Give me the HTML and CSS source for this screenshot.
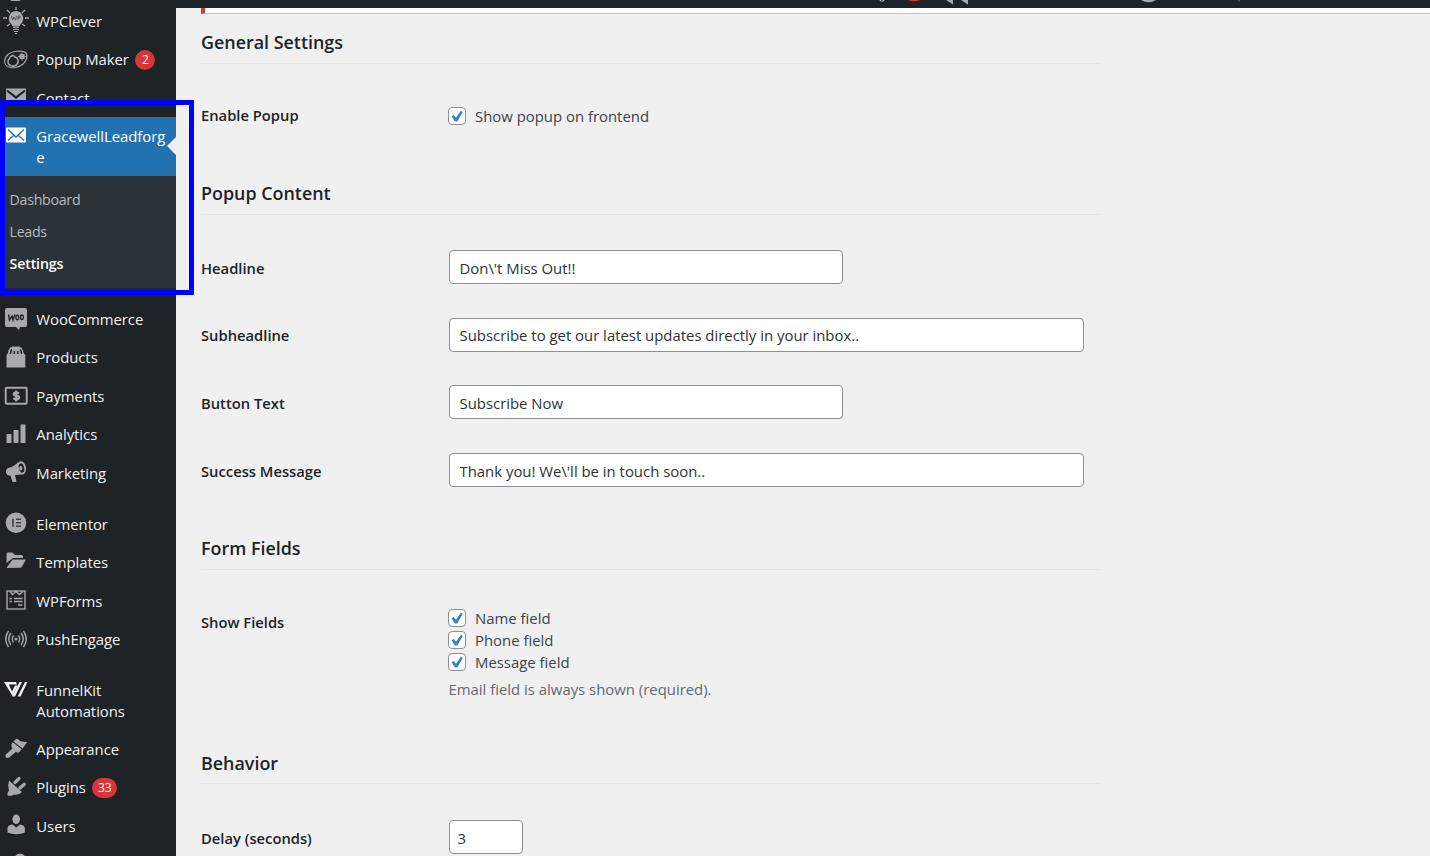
FILE: index.html
```html
<!DOCTYPE html>
<html lang="en">
<head>
    <meta charset="UTF-8">
    <meta name="viewport" content="width=device-width, initial-scale=1.0">
    <title>Popup Settings</title>
    <link rel="stylesheet" href="styles.css">
</head>
<body>
    <svg width="0" height="0" class="defs">
        <symbol id="tick" viewBox="0 0 18 18"><path d="M3.500 9.300 5.900 7.900 8 10.800 12.900 3.800 14.800 4.900 9.200 14.400 7 14.400Z" fill="#3582c4"/></symbol>
    </svg>

    <div class="topbar">
        <svg width="1430" height="8" viewBox="0 0 1430 8">
            <path d="M10 0h11q-2 1.500-5.500 1.500T10 0z" fill="#a7aaad"/>
            <path d="M880 0v.5q2 1.500 4 0V0" fill="none" stroke="#c3c4c7"/>
            <path d="M908 0h12q-6 2.500-12 0z" fill="#d63638"/>
            <path d="M946 0h7v4.500zM961 0h7v4.500z" fill="#a7aaad"/>
            <path d="M1141 0h15q-7.500 4.500-15 0z" fill="#a7aaad"/>
            <path d="M1238 0h2v1.500h-2z" fill="#50575e"/>
        </svg>
    </div>

    <div class="layout">
        <ul class="menu">
            <li class="item">
                <svg class="icon big" viewBox="0 0 26 28"><g fill="none" stroke="#a7aaad" stroke-width="1.300"><path d="M13 0v3M4 3l3 3M22 3l-3 3M0 11h4M22 11h4M4 19l3-2M22 19l-3-2"/></g><path d="M13 4a7.500 7.500 0 0 0-4.800 13L10 19.500h6l1.800-2.500A7.500 7.500 0 0 0 13 4z" fill="#a7aaad"/><path d="M8.500 9l1 4 1.500-3 1.500 3 1-4M15 13V9h2v2h-2" fill="none" stroke="#50575e"/><path d="M10 20.500h6M10 22.500h6M11 24.500h4M12 26.500h2" stroke="#a7aaad" stroke-width="1.200"/></svg>
                <span class="name">WPClever</span>
            </li>
            <li class="item">
                <svg class="icon big" viewBox="0 0 26 28" fill="none" stroke="#a7aaad"><path d="M5 8.500C9 5 19 4 22.500 6.500c3 3 1 9-3 12-4 3-10 4-14 2.500C0 18.500 1 12 5 8.500z" stroke-width="1.100"/><path d="M7.500 19.500c-3-1-3.500-5-1-7 .5-3 4-4 5.500-1.500 3 .5 4 4 2.500 6.500-1.500 2.500-4.500 3-7 2z" stroke-width="1.500"/><circle cx="19" cy="10.500" r="2" stroke-width="1.500"/><path d="M19 6.500v8M15 10.500h8M16.500 8l5 5M21.500 8l-5 5" stroke-width=".9"/></svg>
                <span class="name">Popup Maker</span><span class="badge">2</span>
            </li>
            <li class="item">
                <svg class="icon" viewBox="0 0 22 22"><path d="M1 2.500h20v15H1z" fill="#a7aaad"/><path d="M2 4.500l9 7 9-7" fill="none" stroke="#1d2327" stroke-width="2.200"/></svg>
                <span class="name">Contact</span>
            </li>
            <li class="item current">
                <svg class="icon" viewBox="0 0 22 22"><path d="M2 2.500h18q1 0 1 1v13q0 1-1 1H2q-1 0-1-1v-13q0-1 1-1z" fill="#fff"/><path d="M3 4.500l8 7.500 8-7.500M3 15.500l5.500-5M19 15.500l-5.500-5" fill="none" stroke="#2271b1" stroke-width="1.300"/></svg>
                <span class="name">GracewellLeadforg<br>e</span>
            </li>
            <li>
                <ul class="submenu">
                    <li>Dashboard</li>
                    <li>Leads</li>
                    <li class="active">Settings</li>
                </ul>
            </li>
            <li class="item">
                <svg class="icon" viewBox="0 0 22 22"><path d="M2 0h18q2 0 2 2v15q0 2-2 2h-5l-1 3-3-3H2q-2 0-2-2V2Q0 0 2 0z" fill="#a7aaad"/><path d="M3.500 6.500l1 5.500L7 8l1 4 2-5.500" fill="none" stroke="#1d2327" stroke-width="1.400"/><ellipse cx="12.300" cy="9.500" rx="1.400" ry="2.300" fill="none" stroke="#1d2327" stroke-width="1.300"/><ellipse cx="16.900" cy="9.300" rx="1.400" ry="2.300" fill="none" stroke="#1d2327" stroke-width="1.300"/></svg>
                <span class="name">WooCommerce</span>
            </li>
            <li class="item">
                <svg class="icon" viewBox="0 0 22 22"><path d="M1.500 9L3 7C3.500 2.500 5.500.5 8.500.5h4.500c3 0 5 2 5.500 6.500L20.300 9v12.500H1.500z" fill="#a7aaad"/><path d="M5.500 8c0-2.500.5-4 1.500-4.700M9.300 8V5M12.700 5v3M15 3.300c1 .7 1.500 2.200 1.500 4.700" fill="none" stroke="#1d2327" stroke-width="1.500"/></svg>
                <span class="name">Products</span>
            </li>
            <li class="item">
                <svg class="icon" viewBox="0 0 22 22"><rect x=".7" y="2.700" width="21" height="16" rx="1" fill="none" stroke="#a7aaad" stroke-width="1.900"/><path d="M14 8.500q-1-1-3-1-2.200 0-2.200 1.600 0 1.400 2.400 1.600 2.800.2 2.800 1.900 0 1.700-2.600 1.700-2 0-3-1M11.200 5.500v11" fill="none" stroke="#a7aaad" stroke-width="2.200"/></svg>
                <span class="name">Payments</span>
            </li>
            <li class="item">
                <svg class="icon" viewBox="0 0 22 22" fill="#a7aaad"><rect x="1.500" y="11" width="5" height="9" rx=".6"/><rect x="8.500" y="7" width="5" height="13" rx=".6"/><rect x="15.500" y="1.500" width="5" height="18.500" rx=".6"/></svg>
                <span class="name">Analytics</span>
            </li>
            <li class="item">
                <svg class="icon" viewBox="0 0 22 22"><path d="M15 .5c3-1 6 3 6 7s-2 6.500-4 6l-7 .5L11.500 21H7.500L5.500 14.500C2 15 1 12.500 1 10.500 1 8 2.500 7 4.500 6.500 9 6 11 2 15 .5z" fill="#a7aaad"/><ellipse cx="16.500" cy="7" rx="2.600" ry="4.700" transform="rotate(-14 16.500 7)" fill="#1d2327"/><ellipse cx="15.800" cy="7.300" rx="1.500" ry="2.300" fill="#a7aaad"/></svg>
                <span class="name">Marketing</span>
            </li>
            <li class="item gap">
                <svg class="icon" viewBox="0 0 22 22"><circle cx="11" cy="10.700" r="10.300" fill="#a7aaad"/><path d="M8 6.700v8M11 7.200h5M11 10.700h5M11 14.200h5" stroke="#3c434a" stroke-width="1.600"/></svg>
                <span class="name">Elementor</span>
            </li>
            <li class="item">
                <svg class="icon" viewBox="0 0 22 22" fill="#a7aaad"><path d="M1.500 12V3q0-1.500 1.500-1.500h4.500L10 4h6.500q1.500 0 1.500 1.500V7H8z"/><path d="M1.500 17L7.500 8.500H21L17 15.500q-.7 1.300-2 1.300z"/></svg>
                <span class="name">Templates</span>
            </li>
            <li class="item">
                <svg class="icon" viewBox="0 0 22 22" fill="none" stroke="#a7aaad" stroke-width="1.400"><rect x="2" y="2" width="18" height="18"/><path d="M5 2.500l2.500 3L11 2.500l3.500 3L18 2.500M4.500 9.500h2.500M9 9.500h8.500M4.500 12.500h2.500M9 12.500h8.500M13 16h4.500"/></svg>
                <span class="name">WPForms</span>
            </li>
            <li class="item">
                <svg class="icon" viewBox="0 0 22 22" fill="none" stroke="#a7aaad" stroke-width="1.400"><circle cx="11" cy="11" r="1.500" fill="#a7aaad" stroke="none"/><path d="M8.500 7.500q-2.500 3.500 0 7M13.500 7.500q2.500 3.500 0 7M6 5q-4.500 6 0 12M16 5q4.500 6 0 12M3.500 3q-5.500 8 0 16M18.500 3q5.500 8 0 16"/></svg>
                <span class="name">PushEngage</span>
            </li>
            <li class="item gap tall">
                <svg class="icon" viewBox="0 0 22 22" fill="#f0f0f1"><path d="M-1 3h12l1 2.500H3.800L7 12.500 10 6.500h2.800L7.500 17z"/><path d="M14.500 3H17L10 17.500H7.200zM20 3h2.500L15.500 17.500H12.700z"/></svg>
                <span class="name">FunnelKit<br>Automations</span>
            </li>
            <li class="item">
                <svg class="icon" viewBox="0 0 22 22" fill="#a7aaad"><path d="M10.500 1.500q1.300-1.300 2.600-.2l2 1.700q3 1.200 7.200 1L17.500 10.500 8.500 3.500z"/><path d="M7.800 4.300L16.700 11.200 14 14.300q-1.500 1-3-.5L4.800 19q-2.300 1.500-4 .5-1-1.700.5-3.500L7.500 10.500Q6 9 6.500 6z"/></svg>
                <span class="name">Appearance</span>
            </li>
            <li class="item">
                <svg class="icon" viewBox="0 0 22 22" fill="#a7aaad"><path d="M4 4.500L17 16q-3.500 3.500-8 2.500-2 2-6.500 1V17L4 14.500q-1.500-5 0-10z"/><path d="M10 6.500L14 2.500M15 12l4.300-3.800" stroke="#a7aaad" stroke-width="3.200" stroke-linecap="round"/></svg>
                <span class="name">Plugins</span><span class="badge wide">33</span>
            </li>
            <li class="item">
                <svg class="icon" viewBox="0 0 22 22" fill="#a7aaad"><ellipse cx="11.200" cy="5.300" rx="3.800" ry="4.800"/><path d="M2.500 18.500v-4q0-3.500 5-4l3.700 3 3.700-3q5 .5 5 4v4q-4 1.800-8.700 1.800t-8.700-1.800z"/></svg>
                <span class="name">Users</span>
            </li>
            <li class="item">
                <svg class="icon" viewBox="0 0 22 22" fill="#a7aaad"><circle cx="15" cy="6" r="5.500"/></svg>
            </li>
        </ul>

        <main class="content">
            <div class="notice"></div>

            <h2>General Settings</h2>
            <div class="form">
                <div class="row toggle">
                    <label>Enable Popup</label>
                    <div class="check"><span class="box"><svg><use href="#tick"/></svg></span>Show popup on frontend</div>
                </div>
            </div>

            <h2>Popup Content</h2>
            <div class="form texts">
                <div class="row">
                    <label>Headline</label>
                    <input type="text" class="regular" value="Don\'t Miss Out!!">
                </div>
                <div class="row">
                    <label>Subheadline</label>
                    <input type="text" class="large" value="Subscribe to get our latest updates directly in your inbox..">
                </div>
                <div class="row">
                    <label>Button Text</label>
                    <input type="text" class="regular" value="Subscribe Now">
                </div>
                <div class="row">
                    <label>Success Message</label>
                    <input type="text" class="large" value="Thank you! We\'ll be in touch soon..">
                </div>
            </div>

            <h2>Form Fields</h2>
            <div class="form">
                <div class="row fields">
                    <label>Show Fields</label>
                    <div>
                        <div class="check"><span class="box"><svg><use href="#tick"/></svg></span>Name field</div>
                        <div class="check"><span class="box"><svg><use href="#tick"/></svg></span>Phone field</div>
                        <div class="check"><span class="box"><svg><use href="#tick"/></svg></span>Message field</div>
                        <p class="description">Email field is always shown (required).</p>
                    </div>
                </div>
            </div>

            <h2 class="low">Behavior</h2>
            <div class="form delay">
                <div class="row">
                    <label>Delay (seconds)</label>
                    <input type="text" class="small" value="3">
                </div>
            </div>
        </main>
    </div>

    <div class="highlight"></div>
</body>
</html>
```
FILE: styles.css
```css
* {
    margin: 0;
    padding: 0;
    box-sizing: border-box;
}
body {
    height: 856px;
    overflow: hidden;
    background-color: #f0f0f0;
    color: #3c434a;
    font-family: "Open Sans", "Noto Sans", sans-serif;
    font-size: 14.9px;
}
ul {
    list-style: none;
}
.defs {
    position: absolute;
}
.topbar {
    height: 8px;
    background-color: #1d2327;
}
.topbar svg {
    display: block;
}
.layout {
    display: flex;
    height: 848px;
}

/* sidebar */
.menu {
    width: 176px;
    flex-shrink: 0;
    background-color: #1d2327;
    color: #f0f0f1;
    margin-top: -6.7px;
    height: 854.7px;
    overflow: hidden;
}
.item {
    display: flex;
    align-items: flex-start;
    height: 38.45px;
    padding: 9.4px 0 0 36.3px;
    line-height: 20.8px;
    position: relative;
}
.icon {
    width: 22px;
    height: 22px;
    margin: -1.4px 9.3px 0 -31.3px;
    flex-shrink: 0;
    overflow: visible;
}
.icon.big {
    width: 26px;
    height: 28px;
    margin: -3.4px 7.3px 0 -33.3px;
}
.name {
    white-space: nowrap;
    letter-spacing: -0.05px;
}
.badge {
    width: 20px;
    height: 20px;
    margin: 0.6px 0 0 6.5px;
    border-radius: 10px;
    background-color: #d63638;
    color: #fff;
    font-size: 12px;
    line-height: 20px;
    text-align: center;
}
.badge.wide {
    width: 25px;
}
.item.current {
    height: 59px;
    background-color: #2271b1;
    color: #fff;
}
.item.current::after {
    content: '';
    position: absolute;
    right: 0;
    top: 20px;
    border: 9px solid transparent;
    border-left: 0;
    border-right-color: #f0f0f0;
}
.submenu {
    height: 112px;
    padding: 8px 0 0 9.5px;
    margin-bottom: 12px;
    background-color: #2c3338;
    color: #b4b9be;
    font-size: 14.2px;
    letter-spacing: -0.27px;
    line-height: 32px;
}
.submenu .active {
    color: #fff;
    font-weight: 600;
    letter-spacing: -0.15px;
}
.gap {
    margin-top: 12.5px;
}
.tall {
    height: 59px;
}

/* settings form */
.content {
    flex: 1;
    padding-left: 25px;
}
.notice {
    height: 6px;
    margin-bottom: 6px;
    background-color: #fff;
    border-left: 4px solid #d63638;
    border-bottom: 1px solid #c3c4c7;
}
h2 {
    width: 900px;
    height: 44px;
    border-bottom: 1px solid #e6e6e7;
    color: #1d2327;
    font-size: 17.9px;
    font-weight: 600;
    line-height: 45px;
}
h2.low {
    line-height: 46.5px;
}
.form {
    padding: 18px 0 21.5px;
}
.form.texts {
    padding-bottom: 22.5px;
}
.form.delay {
    padding-top: 19px;
}
.row {
    display: flex;
    align-items: center;
    height: 67.7px;
}
.row label {
    width: 248px;
    padding-top: 1.5px;
    color: #1d2327;
    font-size: 14.75px;
    font-weight: 600;
}
.toggle label {
    padding: 0 0 1px;
}
.row input {
    height: 34px;
    padding: 2px 9.5px 0;
    border: 1px solid #8c8f94;
    border-radius: 4px;
    background-color: #fff;
    color: #2c3338;
    font-family: inherit;
    font-size: 14.9px;
}
.row .regular {
    width: 394px;
}
.row .large {
    width: 635px;
    padding-top: 1px;
}
.row .small {
    width: 74px;
    padding: 1px 7.5px 0;
}
.check {
    display: flex;
    align-items: center;
    height: 22px;
}
.box {
    width: 18px;
    height: 18px;
    margin: 0 9px 0 -1px;
    border: 1px solid #8c8f94;
    border-radius: 4px;
    background-color: #fff;
}
.box svg {
    display: block;
    width: 18px;
    height: 18px;
    margin: -1px;
}
.fields {
    align-items: flex-start;
    height: 130.5px;
    padding-top: 19px;
}
.fields label {
    margin-top: 3.5px;
}
.description {
    margin: 5px 0 0 -0.5px;
    color: #646970;
    line-height: 22px;
}

/* marked area */
.highlight {
    position: absolute;
    left: 0;
    top: 100px;
    width: 194px;
    height: 195px;
    border: 5px solid #0000fe;
}
```
